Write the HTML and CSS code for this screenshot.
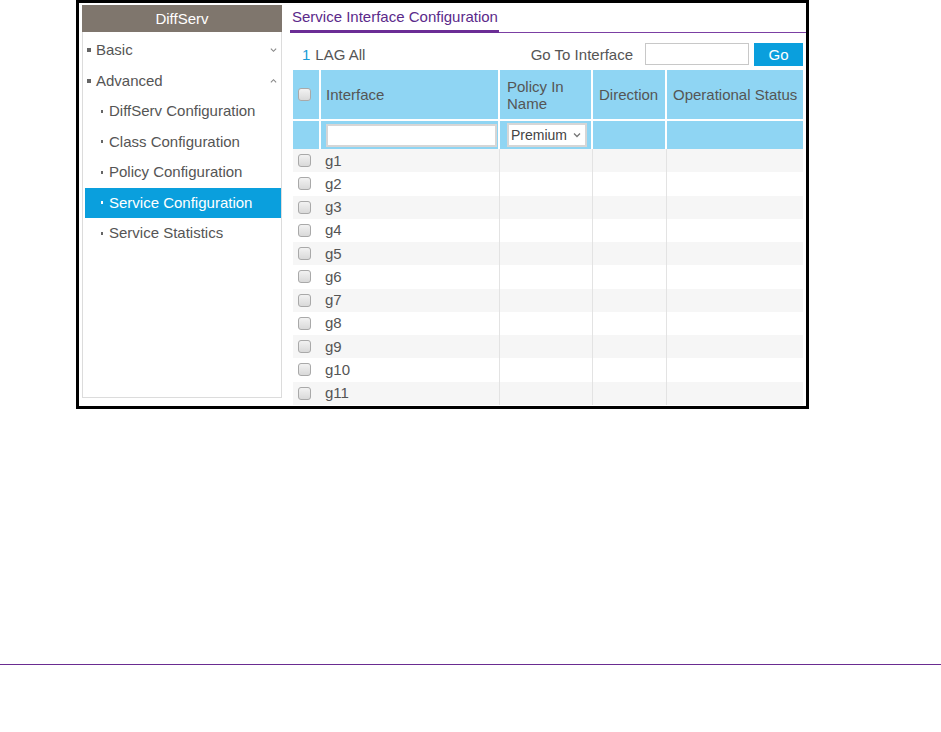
FILE: index.html
```html
<!DOCTYPE html>
<html>
<head>
<meta charset="utf-8">
<link rel="stylesheet" href="styles.css">
</head>
<body>
<div class="frame">
  <aside class="sidebar">
    <div class="side-head">DiffServ</div>
    <ul class="menu">
      <li class="item top"><span class="dot"></span>Basic<svg class="chev" viewBox="0 0 8 6"><polyline points="1,1.5 4,4.5 7,1.5"/></svg></li>
      <li class="item top"><span class="dot"></span>Advanced<svg class="chev" viewBox="0 0 8 6"><polyline points="1,4.5 4,1.5 7,4.5"/></svg></li>
      <li class="item sub"><span class="dot"></span>DiffServ Configuration</li>
      <li class="item sub"><span class="dot"></span>Class Configuration</li>
      <li class="item sub"><span class="dot"></span>Policy Configuration</li>
      <li class="item sub active"><span class="dot"></span>Service Configuration</li>
      <li class="item sub"><span class="dot"></span>Service Statistics</li>
    </ul>
  </aside>
  <main class="main">
    <div class="title-bar"><span class="title">Service Interface Configuration</span></div>
    <div class="toolbar">
      <div class="tabs"><span class="num">1</span><span class="lag">LAG All</span></div>
      <div class="goto"><span class="goto-label">Go To Interface</span><span class="goto-input"></span><span class="go-btn">Go</span></div>
    </div>
    <table class="grid">
      <colgroup>
        <col class="c-check"><col class="c-if"><col class="c-pol"><col class="c-dir"><col class="c-op">
      </colgroup>
      <thead>
        <tr class="head">
          <th><span class="cb"></span></th>
          <th>Interface</th>
          <th>Policy In<br>Name</th>
          <th>Direction</th>
          <th>Operational Status</th>
        </tr>
        <tr class="filter">
          <th></th>
          <th><span class="f-input"></span></th>
          <th><span class="f-select">Premium<svg class="sel-chev" viewBox="0 0 8 6"><polyline points="1,1.5 4,4.5 7,1.5"/></svg></span></th>
          <th></th>
          <th></th>
        </tr>
      </thead>
      <tbody>
        <tr><td><span class="cb"></span></td><td>g1</td><td></td><td></td><td></td></tr>
        <tr><td><span class="cb"></span></td><td>g2</td><td></td><td></td><td></td></tr>
        <tr><td><span class="cb"></span></td><td>g3</td><td></td><td></td><td></td></tr>
        <tr><td><span class="cb"></span></td><td>g4</td><td></td><td></td><td></td></tr>
        <tr><td><span class="cb"></span></td><td>g5</td><td></td><td></td><td></td></tr>
        <tr><td><span class="cb"></span></td><td>g6</td><td></td><td></td><td></td></tr>
        <tr><td><span class="cb"></span></td><td>g7</td><td></td><td></td><td></td></tr>
        <tr><td><span class="cb"></span></td><td>g8</td><td></td><td></td><td></td></tr>
        <tr><td><span class="cb"></span></td><td>g9</td><td></td><td></td><td></td></tr>
        <tr><td><span class="cb"></span></td><td>g10</td><td></td><td></td><td></td></tr>
        <tr><td><span class="cb"></span></td><td>g11</td><td></td><td></td><td></td></tr>
      </tbody>
    </table>
  </main>
</div>
<div class="rule"></div>
</body>
</html>
```

FILE: styles.css
```css
html, body {
  margin: 0;
  padding: 0;
  background: #fff;
  font-family: "Liberation Sans", Arial, sans-serif;
  color: #555;
}
.frame {
  box-sizing: border-box;
  margin-left: 76px;
  width: 733px;
  height: 409px;
  border: 3px solid #000;
  padding: 2px 0 0 3px;
  display: flex;
  overflow: hidden;
}
.sidebar {
  box-sizing: border-box;
  width: 200px;
  height: 393px;
  border: 1px solid #dcdcdc;
  border-top: none;
  flex: none;
}
.side-head {
  height: 27px;
  line-height: 27px;
  background: #7f766d;
  color: #fff;
  text-align: center;
  font-size: 15px;
  margin: 0 -1px;
}
.menu {
  list-style: none;
  margin: 3px 0 0 2px;
  padding: 0;
}
.item {
  position: relative;
  height: 30.5px;
  line-height: 30px;
  font-size: 15px;
  color: #555;
  display: flex;
  align-items: center;
  white-space: nowrap;
}
.item .dot {
  width: 4px;
  height: 4px;
  background: #666;
  margin-right: 5px;
  flex: none;
}
.item.top {
  padding-left: 2px;
}
.item.sub {
  padding-left: 16px;
}
.item.sub .dot {
  width: 2px;
  height: 3px;
  margin-right: 6px;
}
.item.active {
  background: #0a9fdd;
  color: #fff;
}
.item.active .dot {
  background: #fff;
}
.chev {
  width: 7px;
  height: 6px;
  margin-left: auto;
  margin-right: 4px;
  fill: none;
  stroke: #888;
  stroke-width: 1.3;
}
.main {
  flex: 1;
  margin-left: 8px;
  min-width: 0;
}
.title-bar {
  height: 27px;
  border-bottom: 1px solid #7b3fa3;
  display: flex;
  align-items: flex-end;
}
.title {
  display: block;
  white-space: nowrap;
  font-size: 15px;
  color: #5b2a8a;
  padding: 0 1px 5px 2px;
  border-bottom: 3px solid #6b2d95;
  margin-bottom: -1px;
}
.toolbar {
  display: flex;
  justify-content: space-between;
  align-items: center;
  height: 24px;
  margin: 9px 3px 4px 3px;
}
.tabs {
  font-size: 15px;
  padding-left: 9px;
}
.num {
  color: #1a9bd7;
  margin-right: 5px;
}
.lag {
  color: #555;
}
.goto {
  display: flex;
  align-items: center;
  height: 24px;
}
.goto-label {
  font-size: 15px;
  color: #555;
  margin-right: 12px;
}
.goto-input {
  box-sizing: border-box;
  width: 104px;
  height: 22px;
  border: 1px solid #c8c8c8;
  background: #fff;
  margin-right: 5px;
}
.go-btn {
  width: 49px;
  height: 23px;
  line-height: 23px;
  background: #0a9fdd;
  color: #fff;
  text-align: center;
  font-size: 15px;
}
.grid {
  margin-left: 3px;
  width: 510px;
  border-collapse: collapse;
  table-layout: fixed;
  font-size: 15px;
  color: #555;
}
.c-check { width: 27px; }
.c-if { width: 179px; }
.c-pol { width: 93px; }
.c-dir { width: 74px; }
.c-op { width: 137px; }
.head th {
  height: 49px;
  background: #8fd5f3;
  font-weight: normal;
  text-align: left;
  padding: 0 0 0 5px;
  border-left: 2px solid #fff;
  border-bottom: 2px solid #fff;
  line-height: 17px;
  vertical-align: middle;
  white-space: nowrap;
}
.head th:first-child {
  border-left: none;
  padding-left: 5px;
}
.head th:nth-child(2) { padding-left: 5px; }
.head th:nth-child(3) { padding-left: 7px; }
.head th:nth-child(4) { padding-left: 6px; }
.head th:nth-child(5) { padding-left: 6px; }
.filter th {
  height: 28px;
  padding: 0;
  background: #8fd5f3;
  border-left: 2px solid #fff;
  vertical-align: middle;
  text-align: left;
}
.filter th:first-child {
  border-left: none;
}
.f-input {
  display: block;
  box-sizing: border-box;
  width: 171px;
  height: 23px;
  margin-left: 5px;
  background: #fff;
  border: 2px solid #d6d6d6;
}
.f-select {
  display: flex;
  align-items: center;
  box-sizing: border-box;
  width: 80px;
  height: 24px;
  margin-left: 7px;
  background: #fff;
  border: 2px solid #d6d6d6;
  font-size: 14px;
  font-weight: normal;
  color: #444;
  padding-left: 2px;
}
.sel-chev {
  width: 8px;
  height: 6px;
  margin-left: auto;
  margin-right: 4px;
  fill: none;
  stroke: #777;
  stroke-width: 1.3;
}
tbody td {
  height: 23.25px;
  padding: 0 0 0 5px;
  border-left: 1px solid #e3e3e3;
  vertical-align: middle;
  line-height: 16px;
  box-sizing: border-box;
}
tbody td:first-child,
tbody td:nth-child(2) {
  border-left: none;
}
tbody td:nth-child(2) {
  padding-left: 5px;
}
tbody tr:nth-child(odd) td {
  background: #f6f6f6;
}
tbody tr:nth-child(even) td {
  background: #fff;
}
tbody tr {
  height: 23.25px;
}
.cb {
  display: block;
  box-sizing: border-box;
  width: 13px;
  height: 13px;
  border: 1px solid #a9a9a9;
  border-radius: 3px;
  background: linear-gradient(#f2f2f2, #d9d9d9);
}
.rule {
  margin-top: 255px;
  height: 1px;
  background: #6a2c91;
}
```
